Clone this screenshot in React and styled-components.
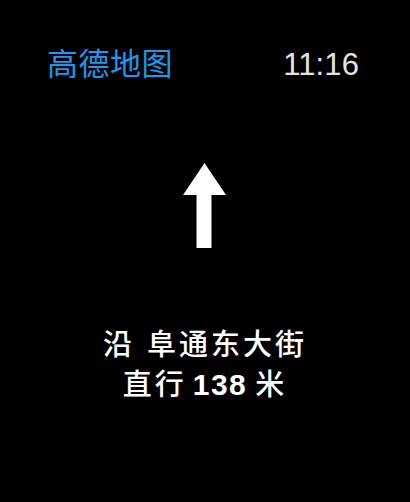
import React from "react";
import styled, { createGlobalStyle } from "styled-components";

const Global = createGlobalStyle`
  html, body { margin: 0; padding: 0; background: #000; }
  body { width: 410px; height: 502px; overflow: hidden; }
`;

const Screen = styled.div`
  width: 410px;
  height: 502px;
  background: #000;
  display: flex;
  flex-direction: column;
  font-family: "Liberation Sans", "Noto Sans CJK SC", sans-serif;
`;

const Header = styled.div`
  display: flex;
  justify-content: space-between;
  align-items: baseline;
  padding: 44px 51px 0 47px;
  line-height: 36px;
`;

const AppName = styled.span`
  font-family: "Noto Sans CJK SC", sans-serif;
  font-size: 31px;
  color: #1e98f0;
  letter-spacing: 0.5px;
`;

const Clock = styled.span`
  font-family: "Liberation Sans", sans-serif;
  font-size: 31px;
  color: #e3e3e3;
  letter-spacing: 0.1px;
`;

const ArrowWrap = styled.div`
  display: flex;
  justify-content: center;
  padding-top: 80px;
`;

const Instruction = styled.div`
  display: flex;
  flex-direction: column;
  align-items: center;
  margin-top: 73px;
  color: #fff;
  font-family: "Noto Sans CJK SC", sans-serif;
  font-weight: 500;
  font-size: 29px;
  line-height: 40px;
  letter-spacing: 3px;
`;

const Line = styled.div`
  white-space: pre;
`;

const Gap = styled.span`
  display: inline-block;
  width: ${(p) => p.$w}px;
`;

const Num = styled.span`
  font-family: "Liberation Sans", sans-serif;
  font-weight: 700;
  font-size: 30px;
  letter-spacing: 1.5px;
`;

export default function App() {
  return (
    <>
      <Global />
      <Screen>
        <Header>
          <AppName>高德地图</AppName>
          <Clock>11:16</Clock>
        </Header>
        <ArrowWrap>
          <svg width="44" height="86" viewBox="0 0 44 86">
            <polygon
              points="21.5,0 43,32 28.5,32 28.5,85 13.5,85 13.5,32 0,32"
              fill="#fff"
            />
          </svg>
        </ArrowWrap>
        <Instruction>
          <Line>
            沿<Gap $w={12} />阜通东大街
          </Line>
          <Line>
            直行<Gap $w={6} />
            <Num>138</Num>
            <Gap $w={8} />米
          </Line>
        </Instruction>
      </Screen>
    </>
  );
}
